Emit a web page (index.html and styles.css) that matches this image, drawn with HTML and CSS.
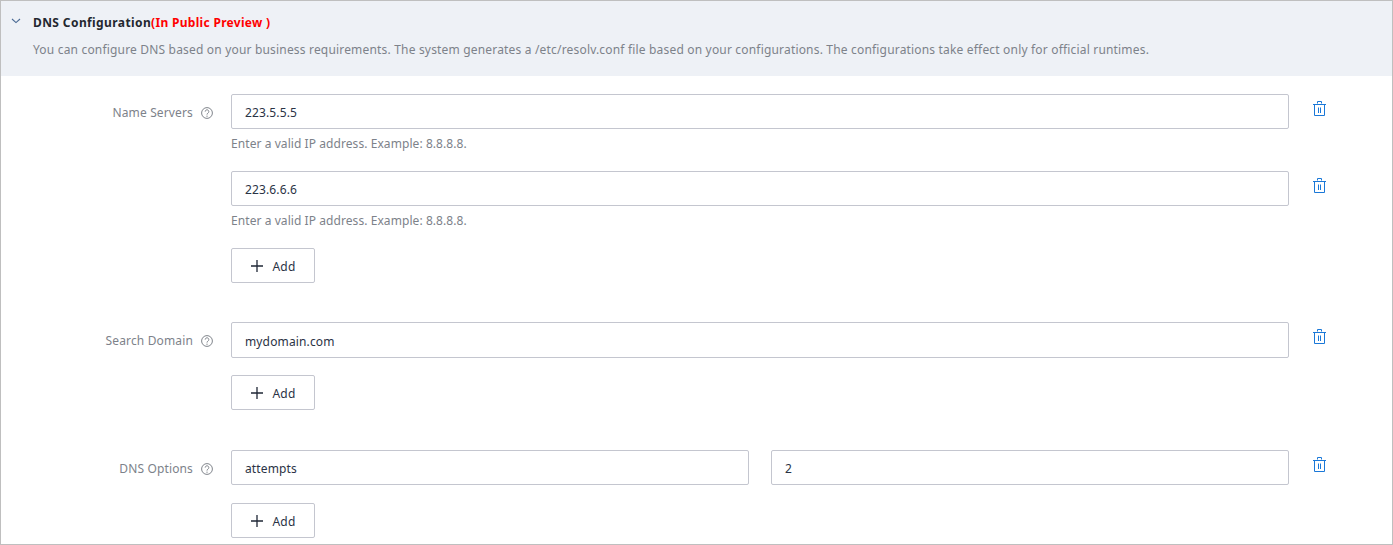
FILE: index.html
```html
<!DOCTYPE html>
<html lang="en">
<head>
<meta charset="utf-8">
<title>DNS Configuration</title>
<link rel="stylesheet" href="styles.css">
</head>
<body>
<section class="panel">
  <header class="panel-head">
    <div class="title-line">
      <svg class="chevron" viewBox="0 0 10 6" width="10" height="6"><path d="M1 1l4 3.6L9 1" fill="none" stroke="#4a6a94" stroke-width="1.1"/></svg>
      <h2 class="title">DNS Configuration<span class="preview">(In Public Preview )</span></h2>
    </div>
    <p class="desc">You can configure DNS based on your business requirements. The system generates a /etc/resolv.conf file based on your configurations. The configurations take effect only for official runtimes.</p>
  </header>
  <div class="form">
    <div class="group group-name">
      <div class="label">Name Servers <svg class="help" viewBox="0 0 12 12" width="12" height="12"><circle cx="6" cy="6" r="5.4" fill="none" stroke="#80858c" stroke-width="1"/><path d="M4.2 4.6a1.8 1.8 0 1 1 2.8 1.5c-.7.4-1 .8-1 1.5" fill="none" stroke="#80858c" stroke-width="1"/><circle cx="6" cy="9.2" r=".65" fill="#80858c"/></svg></div>
      <div class="fields">
        <div class="entry">
          <div class="line"><div class="input">223.5.5.5</div><svg class="trash" viewBox="0 0 13 15" width="13" height="15"><path d="M4.500 2.500V.5h4v2M0 3.500h13M1.500 4v10.500h10V4M5.500 6.500v5.500M7.500 6.500v5.500" fill="none" stroke="#1a78d8" stroke-width="1"/></svg></div>
          <div class="hint">Enter a valid IP address. Example: 8.8.8.8.</div>
        </div>
        <div class="entry">
          <div class="line"><div class="input">223.6.6.6</div><svg class="trash" viewBox="0 0 13 15" width="13" height="15"><path d="M4.500 2.500V.5h4v2M0 3.500h13M1.500 4v10.500h10V4M5.500 6.500v5.500M7.500 6.500v5.500" fill="none" stroke="#1a78d8" stroke-width="1"/></svg></div>
          <div class="hint">Enter a valid IP address. Example: 8.8.8.8.</div>
        </div>
        <button class="add" type="button"><svg viewBox="0 0 12 12" width="12" height="12"><path d="M6 0v12M0 6h12" stroke="#1f2736" stroke-width="1.300"/></svg>Add</button>
      </div>
    </div>
    <div class="group group-search">
      <div class="label">Search Domain <svg class="help" viewBox="0 0 12 12" width="12" height="12"><circle cx="6" cy="6" r="5.4" fill="none" stroke="#80858c" stroke-width="1"/><path d="M4.2 4.6a1.8 1.8 0 1 1 2.8 1.5c-.7.4-1 .8-1 1.5" fill="none" stroke="#80858c" stroke-width="1"/><circle cx="6" cy="9.2" r=".65" fill="#80858c"/></svg></div>
      <div class="fields">
        <div class="line line-tall"><div class="input">mydomain.com</div><svg class="trash" viewBox="0 0 13 15" width="13" height="15"><path d="M4.500 2.500V.5h4v2M0 3.500h13M1.500 4v10.500h10V4M5.500 6.500v5.500M7.500 6.500v5.500" fill="none" stroke="#1a78d8" stroke-width="1"/></svg></div>
        <button class="add add-tight" type="button"><svg viewBox="0 0 12 12" width="12" height="12"><path d="M6 0v12M0 6h12" stroke="#1f2736" stroke-width="1.300"/></svg>Add</button>
      </div>
    </div>
    <div class="group group-options">
      <div class="label">DNS Options <svg class="help" viewBox="0 0 12 12" width="12" height="12"><circle cx="6" cy="6" r="5.4" fill="none" stroke="#80858c" stroke-width="1"/><path d="M4.2 4.6a1.8 1.8 0 1 1 2.8 1.5c-.7.4-1 .8-1 1.5" fill="none" stroke="#80858c" stroke-width="1"/><circle cx="6" cy="9.2" r=".65" fill="#80858c"/></svg></div>
      <div class="fields">
        <div class="line"><div class="pair"><div class="input">attempts</div><div class="input">2</div></div><svg class="trash" viewBox="0 0 13 15" width="13" height="15"><path d="M4.500 2.500V.5h4v2M0 3.500h13M1.500 4v10.500h10V4M5.500 6.500v5.500M7.500 6.500v5.500" fill="none" stroke="#1a78d8" stroke-width="1"/></svg></div>
        <button class="add add-tight2" type="button"><svg viewBox="0 0 12 12" width="12" height="12"><path d="M6 0v12M0 6h12" stroke="#1f2736" stroke-width="1.300"/></svg>Add</button>
      </div>
    </div>
  </div>
</section>
</body>
</html>
```

FILE: styles.css
```css
* { box-sizing: border-box; }
html, body { margin: 0; padding: 0; background: #fff; }
body {
  width: 1393px;
  height: 545px;
  overflow: hidden;
  font-family: "Noto Sans", "Open Sans", sans-serif;
  font-size: 12px;
  letter-spacing: .14px;
  color: #2b3345;
}
.panel {
  width: 1393px;
  height: 545px;
  border: 1px solid #bfbfbf;
  overflow: hidden;
}
.panel-head {
  height: 75px;
  background: #eef1f6;
  padding: 14px 0 0 10px;
}
.title-line { display: flex; align-items: center; height: 16px; }
.chevron { margin-right: 12px; margin-top: -4px; }
.title { margin: 0; font-size: 12px; line-height: 16px; font-weight: 700; color: #23272f; letter-spacing: .4px; }
.preview { color: #f00; letter-spacing: .3px; }
.desc { margin: 11px 0 0 22px; font-size: 12px; line-height: 16px; color: #7d828a; white-space: nowrap; letter-spacing: .18px; }
.form { padding-top: 18px; }
.group { display: flex; }
.group-name { height: 228px; }
.group-search { height: 128px; }
.label {
  width: 212px;
  height: 37px;
  display: flex;
  align-items: center;
  justify-content: flex-end;
  gap: 8px;
  color: #7d828a;
  white-space: nowrap;
}
.fields { margin-left: 18px; width: 1100px; }
.entry { height: 77px; }
.line { display: flex; align-items: flex-start; height: 35px; }
.line-tall { height: 36px; }
.input {
  flex: 1;
  height: 100%;
  border: 1px solid #c4c6cf;
  border-radius: 2px;
  padding: 2px 13px 0;
  display: flex;
  align-items: center;
  background: #fff;
  color: #2b3345;
}
.pair { width: 1058px; height: 100%; display: flex; gap: 22px; flex: none; }
.line > .input { flex: none; width: 1058px; }
.trash { margin: 7px 0 0 24px; flex: none; }
.hint { margin-top: 7px; line-height: 16px; color: #7d828a; letter-spacing: .07px; }
.add {
  width: 84px;
  height: 35px;
  display: flex;
  align-items: center;
  justify-content: center;
  gap: 10px;
  border: 1px solid #c4c6cf;
  border-radius: 2px;
  background: #fff;
  font: inherit;
  letter-spacing: inherit;
  color: #2b3345;
  padding: 2px 0 0;
}
.add svg { margin-top: -2px; }
.add-tight { margin-top: 17px; }
.add-tight2 { margin-top: 18px; }
```
